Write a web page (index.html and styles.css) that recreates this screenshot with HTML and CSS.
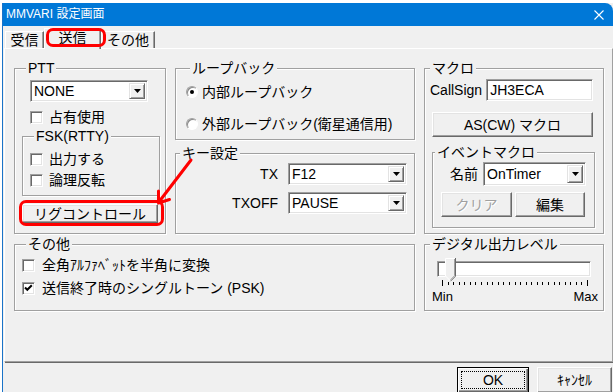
FILE: index.html
```html
<!DOCTYPE html>
<html lang="ja">
<head>
    <meta charset="UTF-8">
    <title>MMVARI 設定画面</title>
    <link rel="stylesheet" href="styles.css">
</head>
<body>

    <div class="window">
        <!-- Title bar -->
        <div class="titlebar">
            <span>MMVARI 設定画面</span>
            <svg class="close" width="10" height="10" viewBox="0 0 10 10"><path d="M0.5 0.5L9.5 9.5M9.5 0.5L0.5 9.5" stroke="#fff" stroke-width="1.1"/></svg>
        </div>

        <!-- Tabs -->
        <div class="tabs">
            <div class="tab tab-1">受信</div>
            <div class="tab tab-2 active">送信</div>
            <div class="tab tab-3">その他</div>
        </div>

        <div class="panel">
            <div class="grid">

                <!-- PTT -->
                <div class="group ptt">
                    <div class="group-title">PTT</div>
                    <div class="combo ptt-combo"><span class="combo-text">NONE</span><span class="drop"><svg width="7" height="4"><path d="M0 0H7L3.5 4Z"/></svg></span></div>
                    <div class="check ptt-check"><span class="box"></span>占有使用</div>
                    <div class="group fsk">
                        <div class="group-title">FSK(RTTY)</div>
                        <div class="check fsk-first"><span class="box"></span>出力する</div>
                        <div class="check fsk-second"><span class="box"></span>論理反転</div>
                    </div>
                    <div class="btn rig">リグコントロール</div>
                </div>

                <!-- Loopback and keys -->
                <div class="mid">
                    <div class="group loop">
                        <div class="group-title">ループバック</div>
                        <div class="radio-row first"><span class="radio on"><span class="dot"></span></span>内部ループバック</div>
                        <div class="radio-row second"><span class="radio"></span>外部ループバック(衛星通信用)</div>
                    </div>
                    <div class="group keys">
                        <div class="group-title">キー設定</div>
                        <div class="key-row tx">
                            <span class="key-label">TX</span>
                            <div class="combo key-combo"><span class="combo-text">F12</span><span class="drop"><svg width="7" height="4"><path d="M0 0H7L3.5 4Z"/></svg></span></div>
                        </div>
                        <div class="key-row txoff">
                            <span class="key-label">TXOFF</span>
                            <div class="combo key-combo"><span class="combo-text">PAUSE</span><span class="drop"><svg width="7" height="4"><path d="M0 0H7L3.5 4Z"/></svg></span></div>
                        </div>
                    </div>
                </div>

                <!-- Macro -->
                <div class="group macro">
                    <div class="group-title">マクロ</div>
                    <div class="call-row">
                        <span class="call-label">CallSign</span>
                        <div class="field">JH3ECA</div>
                    </div>
                    <div class="btn as-btn">AS(CW) マクロ</div>
                    <div class="group event">
                        <div class="group-title">イベントマクロ</div>
                        <div class="name-row">
                            <span class="name-label">名前</span>
                            <div class="combo name-combo"><span class="combo-text">OnTimer</span><span class="drop"><svg width="7" height="4"><path d="M0 0H7L3.5 4Z"/></svg></span></div>
                        </div>
                        <div class="event-buttons">
                            <div class="btn clear disabled">クリア</div>
                            <div class="btn edit">編集</div>
                        </div>
                    </div>
                </div>

                <!-- Others -->
                <div class="group other">
                    <div class="group-title">その他</div>
                    <div class="check other-first"><span class="box"></span>全角ｱﾙﾌｧﾍﾞｯﾄを半角に変換</div>
                    <div class="check other-second"><span class="box"><svg width="11" height="11" viewBox="0 0 11 11"><path d="M2 4.5L4.3 6.8L8.8 2.3" stroke="#000" stroke-width="2" fill="none"/></svg></span>送信終了時のシングルトーン (PSK)</div>
                </div>

                <!-- Digital level -->
                <div class="group level">
                    <div class="group-title">デジタル出力レベル</div>
                    <div class="track">
                        <svg class="thumb" width="11" height="24" viewBox="0 0 11 24">
                            <path d="M0 0H11V18L5.5 23.5L0 18Z" fill="#f0f0f0"/>
                            <path d="M0.5 18.2V0.5H10" stroke="#fff" fill="none"/>
                            <path d="M0.5 18L5.5 23" stroke="#fff" fill="none"/>
                            <path d="M10.5 0V18.2L5.5 23.2" stroke="#696969" fill="none"/>
                            <path d="M9.5 1V17.8L5.5 21.8" stroke="#a0a0a0" fill="none"/>
                        </svg>
                    </div>
                    <div class="ticks"></div>
                    <div class="scale"><span>Min</span><span>Max</span></div>
                </div>

            </div>
        </div>

        <!-- Dialog buttons -->
        <div class="footer">
            <div class="btn ok"><span class="focus">OK</span></div>
            <div class="btn cancel">ｷｬﾝｾﾙ</div>
        </div>
    </div>

    <!-- Red annotations -->
    <div class="mark mark-tab"></div>
    <div class="mark mark-rig"></div>
    <svg class="arrow" width="50" height="60" viewBox="0 0 50 60">
        <path d="M41 10L8.5 52.5M8.5 53V41M8.5 53L19.5 49.5" stroke="#f00" stroke-width="3" stroke-linecap="round" fill="none"/>
    </svg>

</body>
</html>
```

FILE: styles.css
```css
/* Basic reset */
* {
    margin: 0;
    padding: 0;
    box-sizing: border-box;
}

body {
    position: relative;
    width: 613px;
    height: 392px;
    overflow: hidden;
    background: #fff;
    font-family: "Liberation Sans", "Noto Sans CJK JP", sans-serif;
    font-size: 14px;
    line-height: 16px;
    color: #000;
}

.window {
    margin: 3px 0 0 2px;
    height: 389px;
    border-left: 1px solid #1a73c8;
    background: #f0f0f0;
}

/* Title bar */
.titlebar {
    height: 23px;
    background: #0078d7;
    border-top-right-radius: 8px;
    color: #fff;
    font-size: 12px;
    line-height: 23px;
    padding: 0 9px 0 3px;
    display: flex;
    justify-content: space-between;
    align-items: center;
}

/* Tabs */
.tabs {
    height: 22px;
    padding-left: 2px;
    display: flex;
    align-items: flex-end;
}

.tab {
    height: 17px;
    border-top: 1px solid #fff;
    border-left: 1px solid #fff;
    border-right: 1px solid #696969;
    box-shadow: inset -1px 0 #a0a0a0;
    display: flex;
    justify-content: center;
    align-items: center;
}

.tab-1 {
    width: 39px;
}

.tab-2 {
    width: 57px;
}

.tab-3 {
    width: 54px;
}

.tab.active {
    height: 21px;
    margin-bottom: -1px;
    position: relative;
    z-index: 1;
    background: #f0f0f0;
    padding-bottom: 3px;
}

.panel {
    margin-left: 1px;
    height: 314px;
    border: 1px solid;
    border-color: #fff #a0a0a0 #a0a0a0 #fff;
    box-shadow: 1px 1px 0 #696969;
    padding: 19px 0 0 9px;
}

.grid {
    display: grid;
    grid-template-columns: 152px 240px 180px;
    grid-template-rows: 166px 67px;
    column-gap: 9px;
    row-gap: 10px;
}

/* Group boxes */
.group {
    border: 1px solid #a0a0a0;
    box-shadow: inset 1px 1px #fff, 1px 1px #fff;
}

.group-title {
    width: fit-content;
    height: 14px;
    line-height: 14px;
    margin: -8px 0 0 4px;
    padding: 0 2px;
    background: #f0f0f0;
}

/* Controls */
.combo {
    height: 22px;
    display: flex;
    background: #fff;
    border: 1px solid;
    border-color: #a0a0a0 #fff #fff #a0a0a0;
    box-shadow: inset 1px 1px #696969, inset -1px -1px #e3e3e3;
    padding: 2px;
}

.combo-text {
    flex: 1;
    padding-left: 1px;
    display: flex;
    align-items: center;
}

.drop {
    width: 16px;
    background: #f0f0f0;
    border: 1px solid;
    border-color: #e3e3e3 #696969 #696969 #e3e3e3;
    box-shadow: inset 1px 1px #fff, inset -1px -1px #a0a0a0;
    display: flex;
    justify-content: center;
    align-items: center;
}

.field {
    flex: 1;
    height: 22px;
    background: #fff;
    border: 1px solid;
    border-color: #a0a0a0 #fff #fff #a0a0a0;
    box-shadow: inset 1px 1px #696969, inset -1px -1px #e3e3e3;
    padding-left: 3px;
    display: flex;
    align-items: center;
}

.btn {
    background: #f0f0f0;
    border: 1px solid;
    border-color: #fff #696969 #696969 #fff;
    box-shadow: inset -1px -1px #a0a0a0, inset 1px 1px #e3e3e3;
    display: flex;
    justify-content: center;
    align-items: center;
}

.btn.disabled {
    color: #a0a0a0;
    text-shadow: 1px 1px #fff;
}

.check {
    height: 16px;
    display: flex;
    align-items: center;
}

.box {
    width: 13px;
    height: 13px;
    margin-right: 6px;
    background: #fff;
    border: 1px solid;
    border-color: #a0a0a0 #fff #fff #a0a0a0;
    box-shadow: inset 1px 1px #696969, inset -1px -1px #e3e3e3;
}

.box svg {
    display: block;
}

.radio-row {
    height: 16px;
    display: flex;
    align-items: center;
}

.radio {
    width: 12px;
    height: 12px;
    margin-right: 4px;
    border-radius: 50%;
    background: #fff;
    border: 1px solid;
    border-color: #a0a0a0 #fff #fff #a0a0a0;
    box-shadow: inset 1px 1px #8a8a8a;
    display: flex;
    justify-content: center;
    align-items: center;
}

.dot {
    width: 4px;
    height: 4px;
    border-radius: 50%;
    background: #000;
}

/* PTT */
.ptt {
    padding-left: 7px;
}

.ptt-combo {
    width: 118px;
    margin: 5px 0 0 8px;
}

.ptt-check {
    margin: 7px 0 0 8px;
}

.fsk {
    width: 138px;
    margin-top: 11px;
    padding: 0 0 7px 7px;
}

.fsk-first {
    margin-top: 8px;
}

.fsk-second {
    margin-top: 5px;
}

.rig {
    width: 136px;
    height: 19px;
    margin-top: 8px;
}

/* Loopback and keys */
.mid {
    display: flex;
    flex-direction: column;
    gap: 13px;
}

.loop {
    height: 72px;
    padding-left: 10px;
}

.loop .first {
    margin-top: 9px;
}

.loop .second {
    margin-top: 16px;
}

.keys {
    flex: 1;
}

.key-row {
    display: flex;
    justify-content: flex-end;
    align-items: center;
    padding-right: 7px;
}

.key-row.tx {
    margin-top: 3px;
}

.key-row.txoff {
    margin-top: 7px;
}

.key-label {
    margin-right: 10px;
}

.key-combo {
    width: 119px;
}

/* Macro */
.macro {
    padding: 0 10px 0 7px;
}

.macro > .group-title {
    margin-left: -2px;
}

.call-row {
    display: flex;
    align-items: center;
    margin-top: 4px;
}

.call-label {
    margin: 0 4px 0 -2px;
}

.as-btn {
    height: 25px;
    margin-top: 11px;
}

.event {
    width: 163px;
    margin-top: 15px;
    padding: 0 0 10px 8px;
}

.event .group-title {
    margin-left: -6px;
}

.name-row {
    display: flex;
    align-items: center;
    margin-top: 3px;
    padding-left: 9px;
}

.name-label {
    margin-right: 5px;
}

.name-combo {
    width: 103px;
    height: 24px;
}

.event-buttons {
    display: flex;
    gap: 3px;
    margin-top: 6px;
}

.clear {
    width: 71px;
    height: 25px;
}

.edit {
    width: 70px;
    height: 25px;
}

/* Others */
.other {
    grid-column: 1 / 3;
    padding-left: 7px;
}

.other .box {
    margin-right: 7px;
}

.other-first {
    margin-top: 6px;
}

.other-second {
    margin-top: 7px;
}

/* Digital level */
.level > .group-title {
    margin-left: 5px;
}

.track {
    position: relative;
    width: 154px;
    height: 16px;
    margin: 10px 0 0 12px;
    background: #fff;
    border: 1px solid;
    border-color: #a0a0a0 #fff #fff #a0a0a0;
    box-shadow: inset 1px 1px #696969, inset -1px -1px #e3e3e3;
}

.thumb {
    position: absolute;
    left: 7px;
    top: -4px;
}

.ticks {
    width: 146px;
    height: 6px;
    margin: 3px 0 0 17px;
    border-left: 1px solid #000;
    border-right: 1px solid #000;
    background: repeating-linear-gradient(to right, #000 0 1px, transparent 1px 5.577px) 0 2px / 100% 3px no-repeat;
    background-origin: border-box;
}

.scale {
    display: flex;
    justify-content: space-between;
    margin-top: 4px;
    padding: 0 5px 0 7px;
    font-size: 13px;
    line-height: 14px;
}

/* Dialog buttons */
.footer {
    display: flex;
    justify-content: flex-end;
    gap: 8px;
    padding: 5px 1px 0 0;
}

.ok {
    width: 72px;
    height: 26px;
    padding: 3px;
    border-color: #000;
    box-shadow: inset 1px 1px #fff, inset -1px -1px #696969, inset -2px -2px #a0a0a0;
}

.focus {
    flex: 1;
    align-self: stretch;
    border: 1px dotted #000;
    display: flex;
    justify-content: center;
    align-items: center;
}

.cancel {
    width: 75px;
    height: 26px;
}

/* Red annotations */
.mark {
    position: absolute;
    z-index: 2;
    border: 3px solid #f00;
    border-radius: 7px;
}

.mark-tab {
    left: 46px;
    top: 28px;
    width: 60px;
    height: 19px;
}

.mark-rig {
    left: 19px;
    top: 200px;
    width: 145px;
    height: 26px;
}

.arrow {
    position: absolute;
    z-index: 2;
    left: 150px;
    top: 150px;
}
```
